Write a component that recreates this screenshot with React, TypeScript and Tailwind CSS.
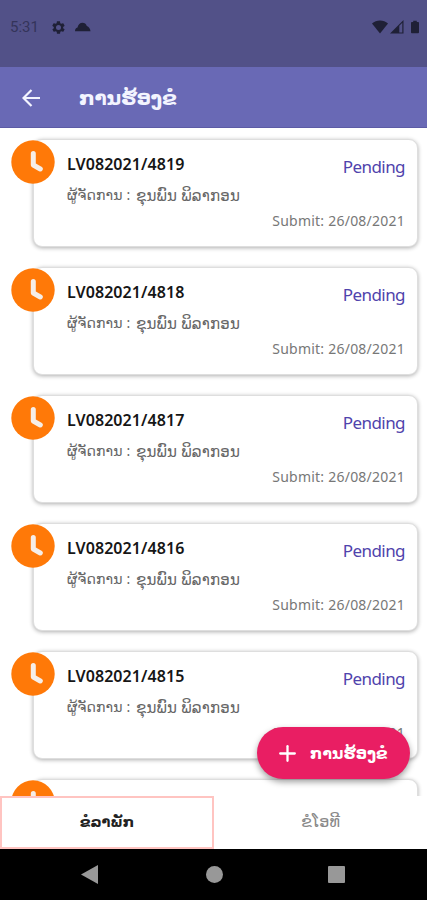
import { Plus } from 'lucide-react'

type LeaveRequest = {
  id: string
  manager: string
  status: string
  submitted: string
}

const requests: LeaveRequest[] = ['4819', '4818', '4817', '4816', '4815', '4814'].map((n) => ({
  id: `LV082021/${n}`,
  manager: 'ຂຸນພົນ ພິລາກອນ',
  status: 'Pending',
  submitted: '26/08/2021',
}))

function StatusBar() {
  return (
    <div className="flex h-[67px] shrink-0 items-start justify-between bg-[#525188] pt-[18px] pr-[8px] pl-[10px] text-[#1f2036]">
      <div className="flex h-[18px] items-center">
        <span className="w-[41px] font-['Roboto'] text-[15px] leading-[18px] text-[#34345a]">5:31</span>
        {/* Settings */}
        <svg className="size-[15px]" viewBox="0 0 24 24" fill="currentColor">
          <path d="M19.4 13a7.500 7.500 0 0 0 0-2l2.100-1.600c.2-.2.300-.4.100-.7l-2-3.400c-.1-.2-.4-.3-.6-.2l-2.500 1a7 7 0 0 0-1.700-1l-.4-2.600c0-.3-.2-.5-.5-.5h-4c-.3 0-.5.2-.5.5L9 5.100a8 8 0 0 0-1.700 1l-2.500-1c-.2-.1-.5 0-.6.200l-2 3.400c-.1.300 0 .5.200.7L4.500 11a7.500 7.500 0 0 0 0 2l-2.100 1.600c-.2.200-.3.400-.1.700l2 3.400c.1.200.4.300.6.200l2.500-1c.5.400 1.100.7 1.700 1l.4 2.600c0 .3.200.5.5.5h4c.3 0 .5-.2.5-.5l.4-2.600c.6-.3 1.200-.6 1.700-1l2.500 1c.2.100.5 0 .6-.2l2-3.400c.2-.3.100-.5-.1-.7zM12 16a4 4 0 1 1 0-8 4 4 0 0 1 0 8z" />
        </svg>
        {/* Cloud */}
        <svg className="ml-[9px] h-[10px] w-[16px]" viewBox="0 0 16 10" fill="currentColor">
          <path d="M0 9.300c.1-2 .8-3.200 2.500-3.700C3.200 2.600 5 .8 7.500.8c2.100 0 3.500 1 4.300 3.100C13.900 4.800 15.300 6.500 15.500 9.300z" />
        </svg>
      </div>
      <div className="flex h-[18px] items-center">
        <svg className="h-[14px] w-[16px]" viewBox="0 0 16 14" fill="currentColor">
          <path d="M0 3.500C2.200 1.400 5 .5 8 .5s5.800.9 8 3L8 13.500z" />
        </svg>
        <svg className="ml-[2px] h-[14px] w-[14px]" viewBox="0 0 14 14" fill="currentColor">
          <path d="M0 13.500 13.500 0v13.500zM9.300 12.400h3V2.800l-3 3z" fillRule="evenodd" />
        </svg>
        <svg className="ml-[7px] h-[14px] w-[8px]" viewBox="0 0 9 14" fill="currentColor">
          <path d="M2.500 1.300V0h4v1.300H8q1 0 1 1V13q0 1-1 1H1q-1 0-1-1V2.300q0-1 1-1z" />
        </svg>
      </div>
    </div>
  )
}

function RequestCard({ request }: { request: LeaveRequest }) {
  return (
    <div className="relative pr-[9px] pl-[33px]">
      <div className="h-[108px] rounded-[9px] border border-[#dedede] bg-white pt-[12px] pr-[12px] pl-[33px] shadow-[0_1px_4px_rgba(0,0,0,0.32)]">
        <div className="flex h-[29px] justify-between">
          <h2 className="text-[16px] leading-[24px] font-semibold tracking-[0.08px] text-[#161616]">{request.id}</h2>
          <span className="pt-[3px] text-[17px] leading-[24px] tracking-[-0.55px] text-[#4f43ac]">{request.status}</span>
        </div>
        <p className="flex h-[28px] text-[14px] leading-[28px] whitespace-nowrap text-[#666]">
          <span className="w-[69px] tracking-[0.15px]">ຜູ້ຈັດການ :</span>
          <span className="text-[15px] tracking-[0.2px]">{request.manager}</span>
        </p>
        <p className="h-[24px] text-right text-[14px] leading-[24px] tracking-[0.23px] text-[#777]">
          Submit: {request.submitted}
        </p>
      </div>
      {/* Clock badge over the card corner */}
      <svg className="absolute top-[1px] left-[11px] size-[44px]" viewBox="0 0 44 44">
        <circle cx="22" cy="22" r="21.700" fill="#ff7908" />
        <path d="M22.300 13.500v11.500l7 4" fill="none" stroke="#f6eee8" strokeWidth="5" strokeLinecap="round" strokeLinejoin="round" />
      </svg>
    </div>
  )
}

export default function App() {
  return (
    <div className="relative flex h-[900px] w-[427px] flex-col overflow-hidden bg-white font-['Noto_Sans','DejaVu_Sans',sans-serif]">
      <StatusBar />

      {/* App bar */}
      <header className="flex h-[61px] shrink-0 items-center border-b border-[#5c5ba5] bg-[#6969b5] pt-[2px] pl-[22px] text-[#f3f4ff]">
        <svg className="size-[18px]" viewBox="0 0 18 18" fill="none" stroke="currentColor" strokeWidth="2.200">
          <path d="M18 9H2M9.500 1 1.500 9l8 8" />
        </svg>
        <h1 className="ml-[39px] text-[20px] leading-[30px] font-bold tracking-[-0.2px] whitespace-nowrap">ການຮ້ອງຂໍ</h1>
      </header>

      <main className="flex min-h-0 flex-1 flex-col gap-[20.100px] overflow-hidden pt-[10.600px]">
        {requests.map((request) => (
          <RequestCard key={request.id} request={request} />
        ))}
      </main>

      {/* Tabs */}
      <div className="grid h-[53px] shrink-0 grid-cols-[214px_213px] bg-white text-[15px] leading-[30px]">
        <button className="border-2 border-[#ffc4c1] pb-[3px] text-[14.500px] font-semibold tracking-[-0.1px] text-[#222]">
          ຂໍລາພັກ
        </button>
        <button className="pb-[3px] text-[16px] text-[#888]">ຂໍໂອທີ</button>
      </div>

      {/* Android navigation */}
      <nav className="flex h-[51px] shrink-0 items-center bg-black pl-[81px] text-[#989898]">
        <svg className="h-[19px] w-[17px]" viewBox="0 0 17 19" fill="currentColor">
          <path d="M0 9.500 17 0v19z" />
        </svg>
        <span className="ml-[108px] size-[17px] rounded-full bg-[#989898]" />
        <span className="ml-[105px] size-[17px] rounded-[1px] bg-[#989898]" />
      </nav>

      <button className="absolute top-[727px] left-[257px] flex h-[52px] w-[153px] items-center rounded-full bg-[#e91e63] pl-[18px] text-white shadow-[0_3px_6px_rgba(0,0,0,0.38)]">
        <Plus size={25} strokeWidth={2.2} />
        <span className="ml-[10px] text-[15.500px] leading-[30px] font-bold tracking-[0.15px] whitespace-nowrap">
          ການຮ້ອງຂໍ
        </span>
      </button>
    </div>
  )
}
